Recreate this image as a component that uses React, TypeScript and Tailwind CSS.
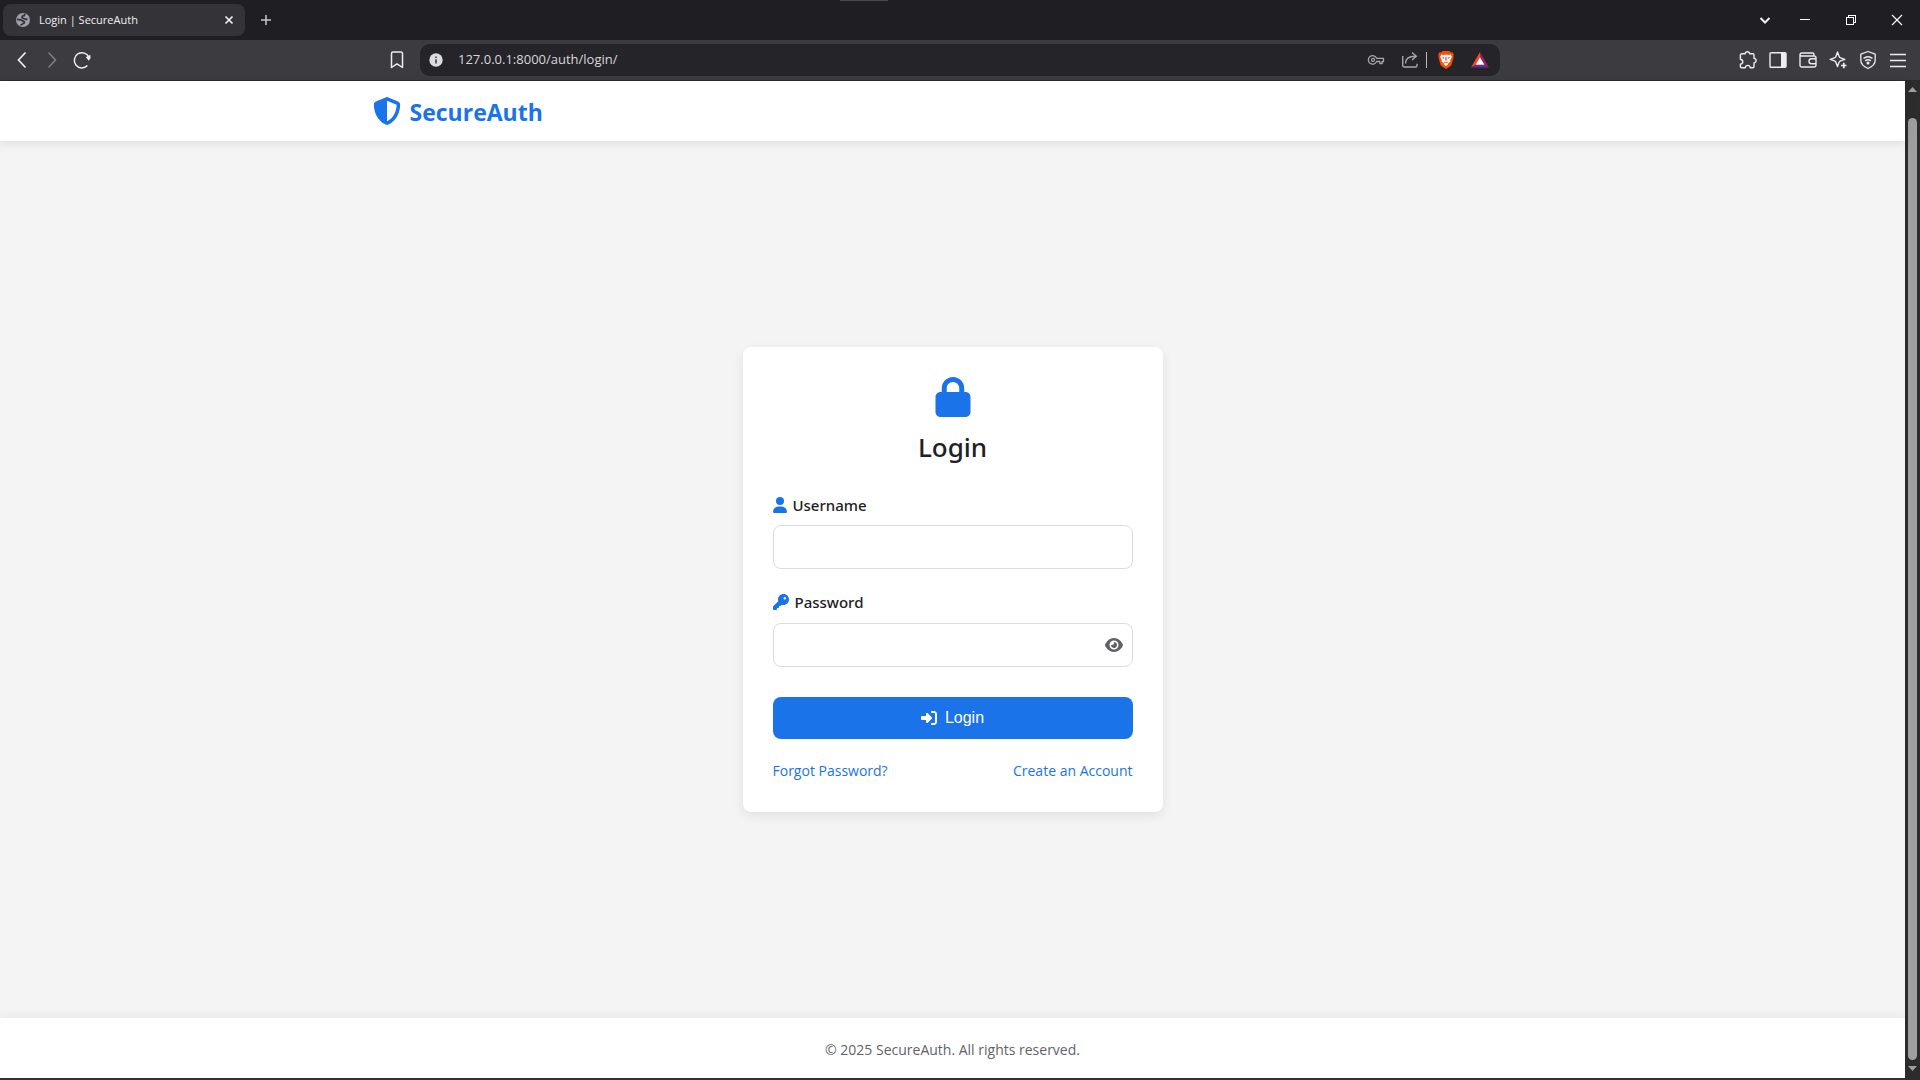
import { useState } from "react";
import type { ReactNode } from "react";
import { FaEye, FaKey, FaLock, FaRightToBracket, FaShieldHalved, FaUser } from "react-icons/fa6";

function ChromeButton({ label, className, children }: { label: string; className: string; children: ReactNode }) {
  return (
    <button type="button" aria-label={label} className={`flex shrink-0 items-center justify-center ${className}`}>
      {children}
    </button>
  );
}

function TabStrip() {
  return (
    <div className="relative flex h-10 items-center bg-[#1f1e23] pl-[3px] text-[#f0f0f2]">
      <div className="absolute left-[840px] top-0 h-px w-12 bg-[#4a4a4a]" />
      <div className="flex h-8 w-[242px] items-center rounded-lg bg-[#343338] pl-3 pr-2">
        <svg viewBox="0 0 16 16" className="size-4">
          <circle cx="8" cy="8" r="7" fill="#9aa0a6" />
          <path
            d="M9.800 1.800 L9.300 3.600 C7.500 3.600 6.600 4.600 7.300 6 L9 6.600 C9.600 7.400 11 7 12.500 7.600 M2 7.400 L5.600 7.800 C7 8.400 7.600 9.400 9 9.300 C9.800 10.200 9.400 11.200 8.200 11.400 C7.600 12.400 6.800 12.800 5.400 13"
            fill="none"
            stroke="#343338"
            strokeWidth="1.700"
          />
        </svg>
        <span className="ml-2 flex-1 truncate text-[11px]">Login | SecureAuth</span>
        <ChromeButton label="Close tab" className="size-4">
          <svg viewBox="0 0 16 16" className="size-4" fill="none" stroke="currentColor" strokeWidth="1.7">
            <path d="M4.5 4.5l7 7M11.5 4.5l-7 7" />
          </svg>
        </ChromeButton>
      </div>
      <ChromeButton label="New tab" className="ml-[7px] size-7">
        <svg viewBox="0 0 16 16" className="size-4" fill="none" stroke="#c8c8cc" strokeWidth="1.5">
          <path d="M8 3v10M3 8h10" />
        </svg>
      </ChromeButton>
      <div className="ml-auto flex">
        <ChromeButton label="Search tabs" className="h-10 w-[34px]">
          <svg viewBox="0 0 16 16" className="size-4" fill="none" stroke="currentColor" strokeWidth="2">
            <path d="M3.5 6l4.5 4.5L12.500 6" />
          </svg>
        </ChromeButton>
        <ChromeButton label="Minimize" className="h-10 w-[46px]">
          <svg viewBox="0 0 16 16" className="size-4" fill="none" stroke="#fff" shapeRendering="crispEdges">
            <path d="M3 7.500h10" />
          </svg>
        </ChromeButton>
        <ChromeButton label="Restore" className="h-10 w-[46px]">
          <svg viewBox="0 0 16 16" className="size-4" fill="none" stroke="#fff" shapeRendering="crispEdges">
            <path d="M3.500 5.500h7v7h-7zM5.500 5.500v-2h7v7h-2" />
          </svg>
        </ChromeButton>
        <ChromeButton label="Close" className="h-10 w-[46px]">
          <svg viewBox="0 0 16 16" className="size-4" fill="none" stroke="#fff" strokeWidth="1.1">
            <path d="M3 3l10 10M13 3L3 13" />
          </svg>
        </ChromeButton>
      </div>
    </div>
  );
}

function AddressBar() {
  return (
    <div className="flex h-8 w-[1080px] min-w-0 shrink items-center rounded-[10px] bg-[#252429] pl-2 pr-[10px]">
      <ChromeButton label="Site information" className="size-4">
        <svg viewBox="0 0 16 16" className="size-4">
          <circle cx="8" cy="8" r="6.700" fill="#dcdce0" />
          <path d="M8 7.200v4.200M8 4.400v1.500" stroke="#37373c" strokeWidth="1.500" />
        </svg>
      </ChromeButton>
      <input
        type="text"
        aria-label="Address"
        defaultValue="127.0.0.1:8000/auth/login/"
        className="ml-[14px] min-w-0 flex-1 bg-transparent text-[13px] text-[#d8d8dc] outline-none"
      />
      <ChromeButton label="Passwords" className="size-5">
        <svg viewBox="0 0 20 20" className="size-5" fill="none" stroke="#a6a6ab" strokeWidth="1.300">
          <path d="M10.600 8.300h6.900v3.200h-1.300v2h-2.400v-2h-3.200a4.300 4.300 0 1 1 0-3.200z" strokeLinejoin="round" />
          <circle cx="7" cy="9.900" r="1.500" />
        </svg>
      </ChromeButton>
      <ChromeButton label="Share" className="ml-[14px] size-5">
        <svg viewBox="0 0 20 20" className="size-5" fill="none" stroke="#a6a6ab" strokeWidth="1.400">
          <path d="M2.700 6v9.500a1.500 1.500 0 0 0 1.500 1.500h11.300a1.500 1.500 0 0 0 1.500-1.500v-1.700M5.500 13.500c0-4.500 3-7.300 9.500-7.300M12 2.500l4.300 3.700L12 10" />
        </svg>
      </ChromeButton>
      <span className="ml-[6px] h-4 w-px bg-[#b9b9bd]" />
      <ChromeButton label="Brave Shields" className="ml-[9px] size-5">
        <svg viewBox="0 0 20 20" className="size-5">
          <path d="M6.500 1h7l1.400 1.500 1.700-.3 1.200 2.200-.5 1.600.3 1-1.900 7.300c-.3 1-.8 1.500-1.500 2L10 19l-4.200-2.700c-.7-.5-1.200-1-1.500-2L2.400 7l.3-1-.5-1.600 1.200-2.200 1.700.3z" fill="#fb4b08" />
          <path d="M5.300 4.500l2.600.4L10 4.400l2.100.5 2.600-.4 1.100 2.300-1.600 3.400.2 1.500-2 1.300-.5 1.400L10 16l-1.900-1.600-.5-1.400-2-1.300.2-1.500-1.600-3.400z" fill="#fff" />
          <path d="M5.800 7l2.600.6-.6 1.300zM14.200 7l-2.600.6.6 1.300zM9.500 7h1l.3 3.500h-1.600zM7.900 11.300L10 12.600l2.100-1.300-.8 2L10 12.900l-1.300.4z" fill="#fb4b08" />
        </svg>
      </ChromeButton>
      <ChromeButton label="Brave Rewards" className="ml-[14px] size-5">
        <svg viewBox="0 0 20 20" className="size-5">
          <path d="M10 2L1 17.500l4.700-2.800L10 7.500z" fill="#ff4724" />
          <path d="M10 2l9 15.500-4.700-2.800L10 7.500z" fill="#9e1f63" />
          <path d="M1 17.500h18l-4.700-2.800H5.700z" fill="#662d91" />
          <path d="M10 7.300l4.400 7.400H5.600z" fill="#fff" />
        </svg>
      </ChromeButton>
    </div>
  );
}

function Toolbar() {
  return (
    <div className="flex h-[41px] items-center border-b border-[#2a292e] bg-[#3c3b40] text-[#ededf0]">
      <div className="flex flex-1 items-center pl-3">
        <ChromeButton label="Back" className="size-5">
          <svg viewBox="0 0 20 20" className="size-5" fill="none" stroke="currentColor" strokeWidth="1.700">
            <path d="M13.500 2.500L6.500 10l7 7.500" />
          </svg>
        </ChromeButton>
        <ChromeButton label="Forward" className="ml-[10px] size-5">
          <svg viewBox="0 0 20 20" className="size-5" fill="none" stroke="#7e7d83" strokeWidth="1.600">
            <path d="M6.500 2.500l7 7.500-7 7.500" />
          </svg>
        </ChromeButton>
        <ChromeButton label="Reload" className="ml-[10px] size-5">
          <svg viewBox="0 0 20 20" className="size-5" fill="none" stroke="currentColor" strokeWidth="1.500">
            <path d="M15.400 15.600A7.600 7.600 0 1 1 17 7.500" />
            <path d="M13.800 7.200l4.400-2.400.4 3.200-1.800 2.800z" fill="currentColor" stroke="none" />
          </svg>
        </ChromeButton>
        <ChromeButton label="Bookmark" className="ml-auto mr-[13px] size-5">
          <svg viewBox="0 0 20 20" className="size-5" fill="none" stroke="currentColor" strokeWidth="1.500" strokeLinejoin="round">
            <path d="M4.500 17.500V3.500a1.500 1.500 0 0 1 1.500-1.500h8a1.500 1.500 0 0 1 1.500 1.500v14L10 13.800z" />
          </svg>
        </ChromeButton>
      </div>
      <AddressBar />
      <div className="flex flex-1 items-center justify-end gap-[10px] pr-3">
        <ChromeButton label="Extensions" className="size-5">
          <svg viewBox="0 0 20 20" className="size-5" fill="none" stroke="currentColor" strokeWidth="1.400" strokeLinejoin="round">
            <path d="M3.700 3.800h3.500C7.300 2.400 8.200 1.700 9.400 1.700s2.100.7 2.200 2.100h3.100a1.300 1.300 0 0 1 1.300 1.300v3.200c1.400.3 2.200 1.100 2.200 2.300s-.8 2-2.200 2.300v3.500a1.300 1.300 0 0 1-1.300 1.300h-2.400c-.2-1.500-1.200-2.300-2.500-2.300s-2.300.8-2.500 2.300H3.700a1.300 1.300 0 0 1-1.300-1.300v-2.200c1.500-.3 2.400-1.200 2.400-2.500S3.900 9.500 2.400 9.200V5.100a1.300 1.300 0 0 1 1.300-1.300z" />
          </svg>
        </ChromeButton>
        <ChromeButton label="Sidebar" className="size-5">
          <svg viewBox="0 0 20 20" className="size-5" fill="none" stroke="currentColor" strokeWidth="1.400">
            <rect x="2" y="2.700" width="16" height="14.600" rx="1" />
            <path d="M13 3h5v14h-5z" fill="currentColor" stroke="none" />
          </svg>
        </ChromeButton>
        <ChromeButton label="Wallet" className="size-5">
          <svg viewBox="0 0 20 20" className="size-5" fill="none" stroke="currentColor" strokeWidth="1.400" strokeLinejoin="round">
            <path d="M16 6V4.500A1.500 1.500 0 0 0 14.500 3H3.700A1.700 1.700 0 0 0 2 4.700v10.600A1.700 1.700 0 0 0 3.700 17h12.600a1.700 1.700 0 0 0 1.700-1.700V7.700A1.700 1.700 0 0 0 16.300 6H3.500A1.500 1.500 0 0 1 2 4.700M18 8.700h-4.500a2.500 2.500 0 0 0 0 5H18" />
          </svg>
        </ChromeButton>
        <ChromeButton label="Leo AI" className="size-5">
          <svg viewBox="0 0 20 20" className="size-5" fill="none" stroke="currentColor" strokeWidth="1.400" strokeLinejoin="round">
            <path d="M9.500 2l1.500 4.200c.3.900.7 1.300 1.600 1.600L16.800 9.300l-4.200 1.500c-.9.300-1.300.7-1.600 1.600l-1.500 4.200L8 12.400c-.3-.9-.7-1.300-1.600-1.600L2.200 9.300l4.200-1.500c.9-.3 1.300-.7 1.600-1.600z" />
            <path d="M15.800 12.700v5.500M13 15.500h5.500" strokeWidth="1.700" />
          </svg>
        </ChromeButton>
        <ChromeButton label="VPN" className="size-5">
          <svg viewBox="0 0 20 20" className="size-5" fill="none" stroke="currentColor" strokeWidth="1.300" strokeLinejoin="round">
            <path d="M10 1.500l7.200 2.700v6c0 3.500-2.700 6.300-7.200 8.300-4.500-2-7.200-4.800-7.200-8.300v-6z" />
            <path d="M5.500 8.500c2.700-2.200 6.300-2.200 9 0M7.200 10.900c1.700-1.300 3.900-1.300 5.600 0" strokeWidth="1.500" />
            <circle cx="10" cy="13" r="0.900" fill="currentColor" />
          </svg>
        </ChromeButton>
        <ChromeButton label="Menu" className="size-5">
          <svg viewBox="0 0 20 20" className="size-5" fill="none" stroke="currentColor" strokeWidth="1.500">
            <path d="M2 4.500h16M2 10.500h16M2 16.500h16" />
          </svg>
        </ChromeButton>
      </div>
    </div>
  );
}

function Scrollbar() {
  return (
    <div className="flex w-[15px] shrink-0 flex-col items-center bg-[#2c2c2c] pt-[6px]" aria-hidden="true">
      <svg viewBox="0 0 9 5" className="h-[5px] w-[9px] shrink-0">
        <path d="M0 5L4.500 0 9 5z" fill="#9f9f9f" />
      </svg>
      <div className="mb-[6px] mt-[26px] w-[9px] flex-1 rounded-full bg-[#9f9f9f]" />
      <svg viewBox="0 0 9 5" className="mb-[9px] h-[5px] w-[9px] shrink-0">
        <path d="M0 0h9L4.500 5z" fill="#9f9f9f" />
      </svg>
    </div>
  );
}

function LoginCard() {
  const [visible, setVisible] = useState(false);
  return (
    <form
      onSubmit={(event) => event.preventDefault()}
      className="w-full max-w-[420px] rounded-lg bg-white p-[30px] shadow-[0_4px_12px_rgba(0,0,0,0.08)]"
    >
      <FaLock className="mx-auto size-10 text-[#1a73e8]" />
      <h1 className="mb-[26px] mt-[10px] text-center font-['Noto_Sans',sans-serif] text-[26px] leading-10 font-medium">
        Login
      </h1>

      <label
        htmlFor="username"
        className="mb-2 flex h-6 items-center font-['Noto_Sans',sans-serif] text-[15px] font-medium"
      >
        <FaUser className="mr-[6px] h-4 w-[14px] text-[#1a73e8]" />
        Username
      </label>
      <input
        id="username"
        type="text"
        className="mb-[21px] block h-11 w-full rounded-lg border border-[#dadce0] px-3 outline-none"
      />

      <label
        htmlFor="password"
        className="mb-[9px] flex h-6 items-center font-['Noto_Sans',sans-serif] text-[15px] font-medium"
      >
        <FaKey className="mr-[6px] size-4 text-[#1a73e8]" />
        Password
      </label>
      <div className="flex h-11 items-center rounded-lg border border-[#dadce0] pr-[9px]">
        <input
          id="password"
          type={visible ? "text" : "password"}
          className="h-full min-w-0 flex-1 bg-transparent px-3 outline-none"
        />
        <button type="button" aria-label="Show password" onClick={() => setVisible(!visible)}>
          <FaEye className="h-4 w-[18px] text-[#5f6368]" />
        </button>
      </div>

      <button
        type="submit"
        className="mt-[30px] flex h-[42px] w-full items-center justify-center gap-2 rounded-lg bg-[#1a73e8] font-['Liberation_Sans',sans-serif] text-base text-white"
      >
        <FaRightToBracket className="size-4" />
        Login
      </button>

      <div className="mb-px mt-[21px] flex justify-between text-sm leading-[21px] text-[#1a73e8]">
        <a href="#forgot">Forgot Password?</a>
        <a href="#register">Create an Account</a>
      </div>
    </form>
  );
}

export default function App() {
  return (
    <div className="flex h-screen flex-col overflow-hidden font-['Open_Sans',sans-serif] text-[#202124]">
      <TabStrip />
      <Toolbar />
      <div className="flex min-h-0 flex-1">
        <div className="flex min-w-0 flex-1 flex-col bg-[#f4f4f4]">
          <header className="z-10 bg-white shadow-[0_2px_10px_rgba(0,0,0,0.1)]">
            <div className="mx-auto flex h-[60px] w-full max-w-[1200px] items-center px-5">
              <a href="#home" className="flex items-center gap-[9px] text-[23px] font-bold text-[#1a73e8]">
                <FaShieldHalved className="size-7" />
                <span className="pt-[2px]">SecureAuth</span>
              </a>
            </div>
          </header>
          <main className="flex flex-1 items-center justify-center">
            <LoginCard />
          </main>
          <footer className="flex h-[60px] items-center justify-center bg-white pt-1 text-sm text-[#5f6368] shadow-[0_-2px_10px_rgba(0,0,0,0.05)]">
            © 2025 SecureAuth. All rights reserved.
          </footer>
          <div className="h-[2px] bg-[#333333]" />
        </div>
        <Scrollbar />
      </div>
    </div>
  );
}
